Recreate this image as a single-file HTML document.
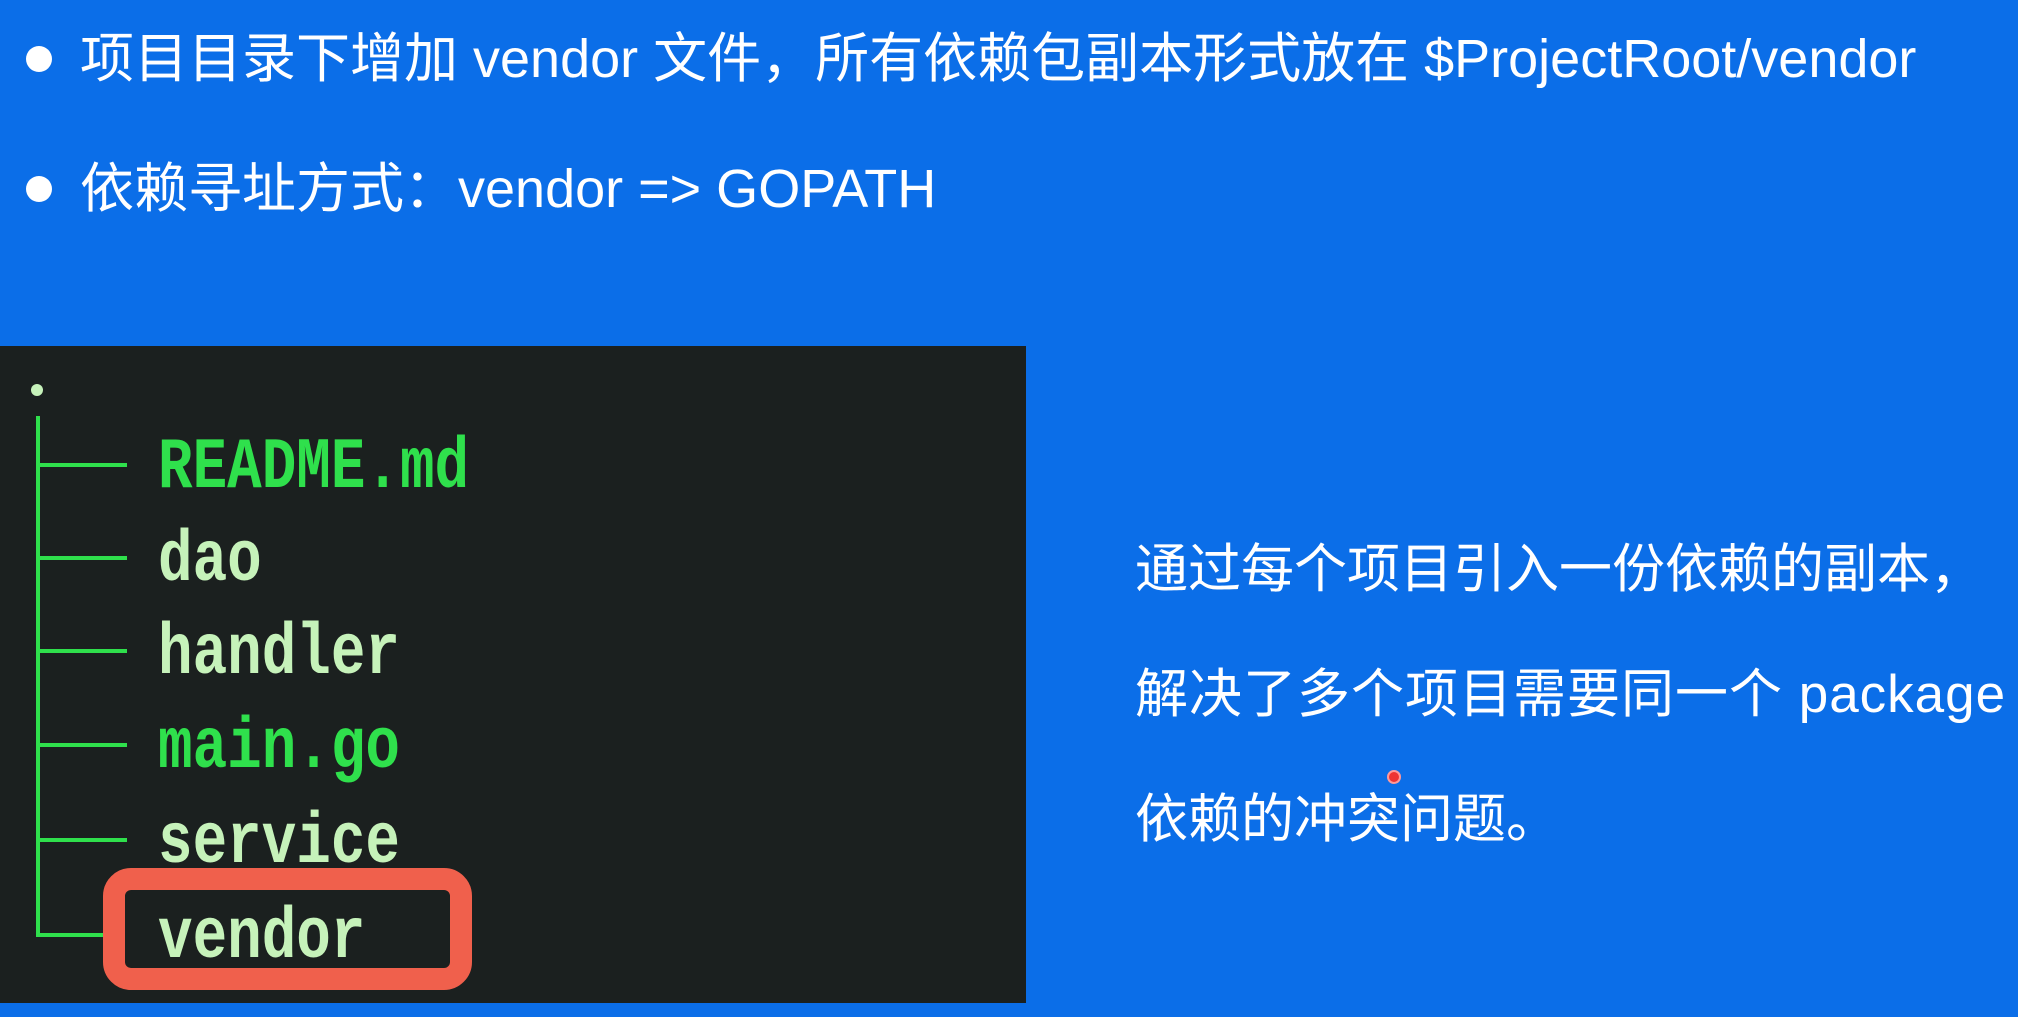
<!DOCTYPE html>
<html><head><meta charset="utf-8"><style>
body{margin:0;width:2018px;height:1017px;background:#0b6ee8;position:relative;overflow:hidden;font-family:"Liberation Sans","Noto Sans CJK SC",sans-serif;color:#fff}
.t{position:absolute;white-space:nowrap;font-size:54px;line-height:1}
.r{font-size:53px}
.dot{position:absolute;width:26px;height:26px;border-radius:50%;background:#fff}
.term{position:absolute;left:0;top:346px;width:1026px;height:657px;background:#1b201f}
.m{position:absolute;font-family:"Liberation Mono",monospace;font-weight:bold;font-size:72px;line-height:1;transform:scaleX(0.8);transform-origin:left top;white-space:nowrap}
.g{color:#2fe04c}.l{color:#c6f2ba}
.h{position:absolute;left:38px;width:89px;height:4px;background:#2fe04c}
</style></head><body>
<div class="dot" style="left:26px;top:46px"></div>
<div class="t" style="left:80px;top:32px">项目目录下增加 vendor 文件，所有依赖包副本形式放在 $ProjectRoot/vendor</div>
<div class="dot" style="left:26px;top:176px"></div>
<div class="t" style="left:80px;top:162px">依赖寻址方式：vendor =&gt; GOPATH</div>

<div class="term">
 <div style="position:absolute;left:31px;top:38px;width:12px;height:12px;border-radius:50%;background:#c6f2ba"></div>
 <div style="position:absolute;left:36px;top:70px;width:4px;height:521px;background:#2fe04c"></div>
 <div class="h" style="top:117px"></div>
 <div class="h" style="top:210px"></div>
 <div class="h" style="top:303px"></div>
 <div class="h" style="top:397px"></div>
 <div class="h" style="top:492px"></div>
 <div class="h" style="top:587px;width:80px"></div>
 <div style="position:absolute;left:103px;top:522px;width:325px;height:78px;border:22px solid #f0604c;border-radius:28px"></div>
 <div class="m g" style="left:158px;top:86px">README.md</div>
 <div class="m l" style="left:158px;top:179px">dao</div>
 <div class="m l" style="left:158px;top:272px">handler</div>
 <div class="m g" style="left:158px;top:366px">main.go</div>
 <div class="m l" style="left:158px;top:461px">service</div>
 <div class="m l" style="left:158px;top:556px">vendor</div>
</div>

<div class="t r" style="left:1135px;top:543px">通过每个项目引入一份依赖的副本，</div>
<div class="t r" style="left:1135px;top:668px;letter-spacing:1px">解决了多个项目需要同一个 package</div>
<div class="t r" style="left:1135px;top:793px">依赖的冲突问题。</div>
<div style="position:absolute;left:1387px;top:770px;width:10px;height:10px;border-radius:50%;background:#e33;border:2px solid #f99"></div>
</body></html>
